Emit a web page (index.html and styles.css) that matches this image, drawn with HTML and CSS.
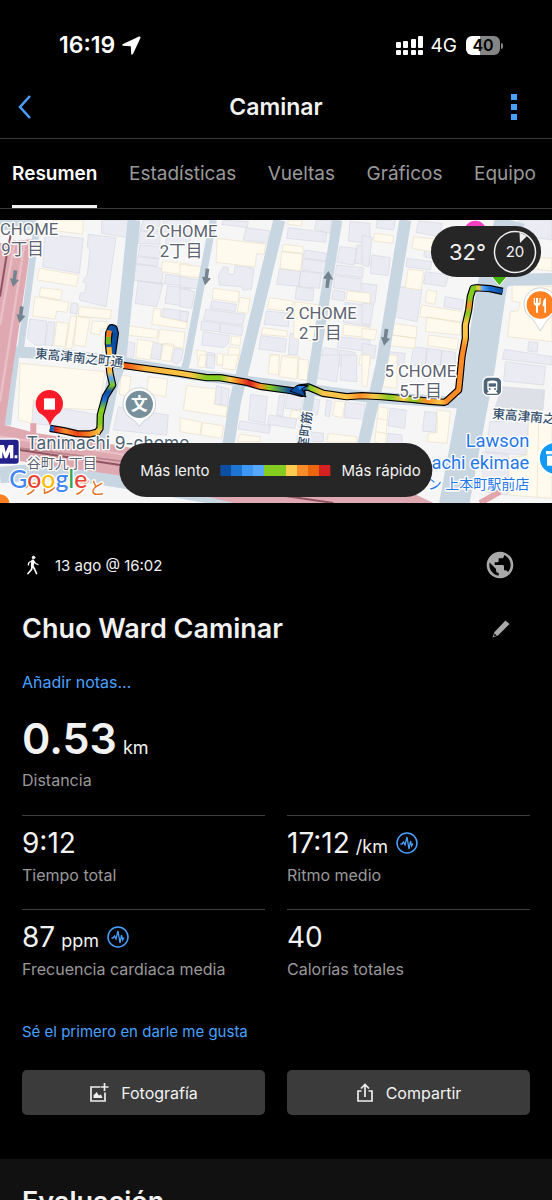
FILE: index.html
```html
<!DOCTYPE html>
<html lang="es">
<head>
<meta charset="UTF-8">
<meta name="viewport" content="width=device-width, initial-scale=1">
<title>Caminar</title>
<link rel="stylesheet" href="styles.css">
</head>
<body>

<div class="app">
    <div class="status-bar">
        <div class="status-left">
            <span class="clock">16:19</span>
            <svg width="19" height="19" viewBox="0 0 19 19"><path d="M17 .6 1 8Q-.6 9.200 1 9.800L8.800 10.200 9.200 18Q9.800 19.600 11 18L18.400 2Q18.800 0 17 .6Z" fill="#fff"/></svg>
        </div>
        <div class="status-right">
            <svg width="28" height="20" viewBox="0 0 28 20" fill="#fff">
                <rect x="0" y="7" width="5" height="6" rx="1"/><rect x="7" y="6" width="5" height="7" rx="1"/><rect x="15" y="4" width="5" height="9" rx="1"/><rect x="22" y="1" width="5" height="12" rx="1"/>
                <rect x="0" y="15" width="5" height="5" rx="1"/><rect x="7" y="15" width="5" height="5" rx="1"/><rect x="15" y="15" width="5" height="5" rx="1"/><rect x="22" y="15" width="5" height="5" rx="1"/>
            </svg>
            <span class="network">4G</span>
            <span class="battery">40</span>
        </div>
    </div>

    <header class="header">
        <button class="icon-button" aria-label="Atrás">
            <svg width="16" height="26" viewBox="0 0 16 26"><path d="M13 2 3 13l10 11" fill="none" stroke="#4aa0ff" stroke-width="2.500"/></svg>
        </button>
        <h1 class="header-title">Caminar</h1>
        <button class="icon-button menu" aria-label="Más opciones">
            <svg width="6" height="26" viewBox="0 0 6 26" fill="#4aa0ff"><path d="M0 0h6v6H0zM0 10h6v6H0zM0 20h6v6H0z"/></svg>
        </button>
    </header>

    <nav class="tabs">
        <a href="#resumen" class="tab active">Resumen</a>
        <a href="#estadisticas" class="tab">Estadísticas</a>
        <a href="#vueltas" class="tab">Vueltas</a>
        <a href="#graficos" class="tab">Gráficos</a>
        <a href="#equipo" class="tab">Equipo</a>
    </nav>

    <div class="map">
        <svg class="map-canvas" viewBox="0 15 1656 849" preserveAspectRatio="xMidYMid slice">
            <defs>
                <linearGradient id="walk" gradientUnits="userSpaceOnUse" x1="340" y1="0" x2="1340" y2="0">
                    <stop offset="0" stop-color="#f0701a"/><stop offset=".04" stop-color="#ef5a18"/><stop offset=".1" stop-color="#fbb53a"/><stop offset=".23" stop-color="#fcc549"/>
                    <stop offset=".28" stop-color="#84cc20"/><stop offset=".32" stop-color="#84cc20"/><stop offset=".35" stop-color="#fcc549"/><stop offset=".37" stop-color="#fb8b25"/>
                    <stop offset=".41" stop-color="#d92121"/><stop offset=".44" stop-color="#fb8b25"/><stop offset=".47" stop-color="#84cc20"/><stop offset=".53" stop-color="#0b4ea2"/>
                    <stop offset=".55" stop-color="#1c6fd0"/><stop offset=".575" stop-color="#0b4ea2"/><stop offset=".59" stop-color="#84cc20"/><stop offset=".63" stop-color="#fcc549"/>
                    <stop offset=".7" stop-color="#fcc549"/><stop offset=".74" stop-color="#fb8b25"/><stop offset=".78" stop-color="#fcc549"/><stop offset=".83" stop-color="#84cc20"/>
                    <stop offset=".87" stop-color="#fcc549"/><stop offset=".9" stop-color="#84cc20"/><stop offset=".94" stop-color="#fb8b25"/><stop offset=".98" stop-color="#fcc549"/><stop offset="1" stop-color="#fb8b25"/>
                </linearGradient>
                <linearGradient id="walkEast" gradientUnits="userSpaceOnUse" x1="0" y1="220" x2="0" y2="420">
                    <stop offset="0" stop-color="#84cc20"/><stop offset=".15" stop-color="#84cc20"/><stop offset=".25" stop-color="#fb8b25"/><stop offset=".38" stop-color="#84cc20"/>
                    <stop offset=".52" stop-color="#fcc549"/><stop offset=".7" stop-color="#fcc549"/><stop offset=".88" stop-color="#fb8b25"/>
                </linearGradient>
                <linearGradient id="walkStart" gradientUnits="userSpaceOnUse" x1="1420" y1="0" x2="1508" y2="0">
                    <stop offset="0" stop-color="#84cc20"/><stop offset=".2" stop-color="#fcc549"/><stop offset=".32" stop-color="#54a5fb"/><stop offset=".55" stop-color="#1c6fd0"/><stop offset="1" stop-color="#0b4ea2"/>
                </linearGradient>
                <linearGradient id="walkWest" gradientUnits="userSpaceOnUse" x1="0" y1="450" x2="0" y2="650">
                    <stop offset="0" stop-color="#fb8b25"/><stop offset=".1" stop-color="#fcc549"/><stop offset=".2" stop-color="#54a5fb"/><stop offset=".3" stop-color="#84cc20"/><stop offset=".4" stop-color="#0b4ea2"/>
                    <stop offset=".52" stop-color="#1c6fd0"/><stop offset=".66" stop-color="#84cc20"/><stop offset=".88" stop-color="#84cc20"/><stop offset="1" stop-color="#fcc549"/>
                </linearGradient>
                <linearGradient id="walkEnd" gradientUnits="userSpaceOnUse" x1="150" y1="0" x2="300" y2="0">
                    <stop offset="0" stop-color="#0b4ea2"/><stop offset=".06" stop-color="#1c6fd0"/><stop offset=".1" stop-color="#d92121"/><stop offset=".3" stop-color="#fb8b25"/><stop offset=".55" stop-color="#e84318"/><stop offset=".8" stop-color="#fb8b25"/><stop offset="1" stop-color="#fcc549"/>
                </linearGradient>
            </defs>

            <rect y="15" width="1656" height="849" fill="#f6f6f7"/>

            <!-- buildings, grey -->
            <g fill="#ebecf3" stroke="#d6d8e1" stroke-width="2">
                <path d="M305 15H385L382 68 305 55ZM135 58 250 70 238 175 128 155ZM265 58 348 68 318 275 238 255 240 235 255 232 258 205 248 200 262 180 270 105 262 95ZM215 263 235 267 231 298 210 293ZM90 312 140 318 135 390H105L82 370ZM145 320 165 322 158 392 135 390ZM420 48 480 55V88L415 85ZM420 90 482 95 478 130 415 122ZM412 125 475 132 472 155 408 145ZM408 148 472 155 490 165 485 208 400 195ZM415 198 490 205 470 275 405 265ZM497 178 545 184 540 212 493 206ZM502 212 570 222V275L495 265ZM490 280 565 290 562 320 485 305ZM375 378 405 385 400 428 385 432 368 420ZM457 380 487 388 480 435 452 430ZM525 400 550 403 545 435 530 448 515 440ZM430 15H480V50L420 45ZM490 15H570V55L485 50ZM500 58H570V88H496Z"/>
                <path transform="translate(540)" d="M130 15 205 20 202 38 125 28ZM198 38 270 48 265 85 190 75ZM130 155 145 158 143 178H162L165 152 222 160 215 222 190 226 185 215 118 210 115 180ZM95 258 170 268 165 290 90 280ZM78 283 195 298 188 330 70 315ZM65 318 120 325 118 350 62 345ZM122 325 190 335 185 362 120 352ZM70 350 148 362 145 385 132 398 65 390ZM82 412 105 415 102 450H78ZM0 185 60 195 52 222 0 215ZM0 220 45 230 35 280 0 275ZM0 288 27 292 20 320 0 318ZM325 38 440 52 437 82 320 70ZM410 15H455L450 55 403 42ZM375 105 440 115 437 138 368 128ZM368 132 438 140 433 175 365 165ZM298 162 362 169 356 214 290 208ZM362 169 425 175 418 220 356 214ZM350 215 402 222 398 258 345 252ZM260 288 330 295 325 335 252 328ZM243 362 320 372 315 412 236 402ZM330 355 357 358 352 420 325 418ZM510 20 570 25V85L505 78ZM480 95 530 100 522 150 470 142ZM532 90H570V150L525 145ZM470 150 550 158 548 188 465 178ZM465 182 545 192 540 230 460 218ZM460 225 495 230 492 258 455 252ZM495 262 570 272V335L490 322ZM478 365 570 375V410L472 398ZM430 398 475 403 470 450H420ZM480 405 525 412 522 450H475Z"/>
                <path transform="translate(1086)" d="M0 60 30 68 20 155 0 150ZM30 120 85 128 78 182 25 175ZM0 205 45 210 38 265 0 262ZM0 264 35 268 25 330 0 325ZM0 385 42 392 38 430 0 425ZM45 15H100L95 45 42 38ZM170 18 240 25 232 65 162 52ZM190 100 215 105 210 130 185 125ZM135 130 210 140 205 165 132 155ZM190 170 260 180 250 215 185 205ZM112 215 180 222 165 320 95 305ZM250 245 305 255 300 285 245 275ZM155 395 195 400 190 450H145ZM195 400 240 406 235 450H190ZM240 406 280 412V450H235ZM75 410 130 415 125 450H70ZM470 15H570V75L470 60ZM500 380 528 383 525 412 497 408ZM428 403 570 425V450L420 432Z"/>
                <path transform="translate(0 420)" d="M100 135 180 160 300 180 285 225 230 220 95 205ZM355 155 400 165 505 180 500 240 340 225Z"/>
                <path transform="translate(540 420)" d="M110 92 148 102 142 155 103 145ZM125 97 122 150M212 118 262 125 255 205 205 195ZM298 120 315 122 308 185 290 180ZM322 118 370 125 365 165 315 160ZM268 180 350 192 345 220 262 208ZM180 198 272 212 268 235 175 222ZM400 130 420 135 412 180 398 178ZM440 135 455 138 448 185 435 182ZM497 142 555 148 550 193 492 188ZM375 228 430 235V260H370ZM420 0H480L470 80 412 70ZM485 0H530V80L480 75ZM82 0H105L102 40 78 38Z"/>
                <path transform="translate(1086 420)" d="M85 160 133 165 128 220 78 212ZM188 170 225 173 220 232 182 228ZM78 235 120 240V280H75ZM430 20 550 35 545 90 425 78ZM385 200 500 198 490 300 370 290ZM360 290 440 300 435 420 365 410Z"/>
                <path d="M1506 515 1634 525 1629 585 1486 575Z" fill="#dee0e8"/>
            </g>

            <!-- buildings, shops -->
            <g fill="#fffaed" stroke="#e8dfc9" stroke-width="2">
                <path d="M160 15H250L248 58 155 45ZM118 160 235 180 230 214 112 195ZM122 218 187 225 182 255 118 243ZM105 245 207 262 200 292 170 288 165 312 98 303ZM238 275 335 285 330 312 235 303ZM212 303 230 305 215 402 197 400ZM230 305 270 310 255 395 222 390ZM278 318 322 320V340L303 342 300 360 272 355ZM170 320 205 325 195 395 162 392ZM310 365 325 367 322 418 308 415ZM488 138 570 148V182L484 170ZM462 280 482 283V305L562 322 560 342 455 328ZM382 332 475 345 470 370 375 360ZM480 343 555 352 550 400 473 385ZM413 373 460 380 450 435 407 428ZM490 385 522 388 512 440 482 435Z"/>
                <path transform="translate(540)" d="M112 70 257 88 252 118 230 115 225 156 108 142ZM0 148 62 155 60 188 0 182ZM100 220 178 230 174 262 97 252ZM180 247 210 252 203 295 172 290ZM155 363 182 367 180 392 152 388ZM50 405 78 410 75 450H55ZM112 415 130 418V450H110ZM148 395 180 400 175 450H135ZM310 88 370 95 368 115 307 108ZM305 110 368 118 362 168 300 160ZM268 248 340 258 335 290 263 282ZM248 338 322 348 320 365 244 358ZM345 260 420 270 415 380 340 370ZM270 418 298 421 295 450H268ZM308 420 358 425V450H303ZM502 228 570 235V265L498 255ZM492 328 570 338V368L488 360ZM540 420H570V450H538ZM325 15H365V33L323 28Z"/>
                <path transform="translate(1086)" d="M38 55 95 62 92 85 35 78ZM0 340 45 345 38 375 0 370ZM155 65 215 72 208 110 150 100ZM138 162 185 168 178 225 130 218ZM195 225 225 230 218 268 190 262ZM180 270 300 290 298 320 172 305ZM195 305 300 325 295 360 190 350ZM200 360 290 372 285 405 197 392ZM92 325 165 335 162 370 85 358ZM85 360 162 370 158 400 82 392ZM450 208 570 215V380L437 365 445 290 468 288 475 262 450 258ZM490 125 570 130V168L500 160Z"/>
                <path transform="translate(0 420)" d="M60 25 315 50 300 140 305 165 195 160 100 135 95 205 55 195ZM363 60 393 65 385 125 358 118ZM445 65 503 72 497 125 440 115Z"/>
                <path transform="translate(540 420)" d="M20 92 108 102 103 148 142 155 138 185 10 165ZM0 188 65 202 60 240 0 230ZM68 203 130 212 125 250 62 240ZM335 165 362 168 358 192 330 188ZM465 138 495 140 488 188 458 182ZM178 238 240 245V260H172ZM445 235 530 245V262H440ZM305 5 355 10 350 72 298 65ZM355 12 385 15 382 75 355 72ZM270 0H298L295 60 265 55ZM60 0H80L75 38 52 35ZM130 0H175L165 45 127 40Z"/>
                <path transform="translate(1086 420)" d="M0 0H25L15 95 0 92ZM60 0H105V100L62 95ZM50 155 78 160 70 275 38 260ZM45 190 75 195M42 230 72 235M225 165 265 170 255 265 195 260 200 235 225 232ZM500 195 570 200V430L440 420V310L495 300ZM530 198 525 425"/>
            </g>

            <!-- streets -->
            <g fill="none" stroke="#c8d6e2" stroke-linejoin="round">
                <path d="M110 40 62 400" stroke-width="20"/>
                <path d="M402 15 358 450 338 500 300 690" stroke-width="38"/>
                <path d="M640 15 560 440 548 480" stroke-width="22"/>
                <path d="M838 15 735 440 705 560 685 690 650 864" stroke-width="36"/>
                <path d="M1012 15 945 435 920 600 900 700" stroke-width="30"/>
                <path d="M1216 15 1145 450 1110 600 1085 710" stroke-width="36"/>
                <path d="M1530 15 1475 220 1441 450 1405 640 1360 880" stroke-width="90"/>
                <path d="M1480 210 1530 194 1656 192" stroke-width="36"/>
                <path d="M30 410 180 418 350 440 560 476 900 520 1100 546 1300 558 1420 566" stroke-width="34"/>
                <path d="M45 420 20 630" stroke-width="26"/>
                <path d="M0 780 180 765 400 800 760 864" stroke-width="50"/>
                <path d="M0 30H110" stroke-width="30"/>
            </g>

            <!-- railway -->
            <path d="M0 85 95 72 48 400 40 450 14 630 110 655 350 690 800 780 1250 840 1300 864H700L350 780 0 730Z" fill="#dfa9b2"/>
            <path d="M45 75 0 330M75 75 25 400 0 560M0 665 350 715 700 790" fill="none" stroke="#e9c0c5" stroke-width="7"/>
            <path d="M32 60 20 120 0 245M60 705 360 750 800 835 1000 864" fill="none" stroke="#8f5560" stroke-width="6"/>
            <path d="M0 692 360 738 820 830" fill="none" stroke="#b98189" stroke-width="5"/>
            <path d="M100 625V665M1500 830 1440 864" stroke="#e3a5ac" stroke-width="18"/>

            <!-- one-way arrows -->
            <g fill="#75838f">
                <path id="oneway" d="M41 165 52 167 48 193 57 195 39 216 30 190 38 191Z"/>
                <use href="#oneway" x="19" y="108"/><use href="#oneway" x="576" y="-5"/><use href="#oneway" x="1113" y="176"/>
                <path d="M985 168 1000 194 990 193 986 219 976 218 979 192 969 190Z"/>
            </g>

            <!-- recorded track -->
            <g fill="none" stroke-linejoin="round">
                <g stroke="#000" stroke-width="22">
                    <path id="track1" d="M1508 229 1470 221 1428 218"/>
                    <path id="track2" d="M1432 218 1419 220 1411 245 1406 285 1396 330V370L1386 425 1376 525 1338 560"/>
                    <path id="track3" d="M1342 558 1332 562 1290 559 1236 553 1146 545 1086 542 1040 545 970 535 925 516 900 519 906 535 875 527 780 514 740 502 660 488 620 488 540 475 375 452 330 446"/>
                    <path id="track4" d="M326 440 330 476 338 510 316 545 301 600 300 640 290 654"/>
                    <path id="track5" d="M298 650 270 657 230 656 190 647 150 640"/>
                    <path id="track6" d="M334 440 346 355 342 340 334 338 326 355 325 385 331 440"/>
                </g>
                <g stroke-width="15">
                    <use href="#track3" stroke="url(#walk)"/><use href="#track2" stroke="url(#walkEast)"/><use href="#track1" stroke="url(#walkStart)"/>
                    <use href="#track4" stroke="url(#walkWest)"/><use href="#track5" stroke="url(#walkEnd)"/><use href="#track6" stroke="#0b4ea2"/>
                    <path d="M328 346 325 370" stroke="#f07a1d"/><path d="M325 366V388" stroke="#6fb92b"/><path d="M327 396 331 436" stroke="#fbb53a"/>
                </g>
                <path d="M890 512H925L905 520 918 546 870 528Z" fill="#0b4ea2" stroke="#000" stroke-width="3"/>
                <path d="M893 514H915L898 524Z" fill="#2f8af5"/>
            </g>

            <!-- places -->
            <g stroke="#fff" stroke-width="7">
                <circle cx="1426" cy="52" r="38" fill="#f33fc0"/>
                <path d="M1462 170 1498 212 1534 170Z" fill="#43b30b" stroke-width="3"/>
                <rect x="1449" y="486" width="56" height="56" rx="15" fill="#4d6578" stroke-width="4"/>
                <circle cx="1666" cy="730" r="50" fill="#1499f5"/>
                <circle cx="0" cy="866" r="32" fill="#ff8122"/>
                <rect x="-20" y="672" width="78" height="76" rx="10" fill="#22208a" stroke-width="4"/>
            </g>
            <g fill="#fff" stroke="#b4bcc4" stroke-width="2">
                <path d="M1621 348Q1610 328 1595 309A49 49 0 1 1 1647 309Q1632 328 1621 348Z"/>
                <path d="M418 634Q408 618 392 609A49 49 0 1 1 444 609Q428 618 418 634Z"/>
            </g>
            <circle cx="1621" cy="270" r="41" fill="#ff8122"/>
            <circle cx="418" cy="568" r="41" fill="#78909c"/>
            <path d="M150 632Q142 606 118 594A41 41 0 1 1 178 594Q158 606 150 632Z" fill="#fb1a28"/>
            <path d="M132 550H165V584H132Z" fill="#fff"/>
            <path d="M0 730V690H12L17 712 26 690H40V730H30V710L21 730H14L7 710V730ZM44 721H52V730H44Z" fill="#fff"/>
            <path d="M1601 249V263Q1601 271 1608 272V293H1614V272Q1622 271 1622 263V249H1618V263H1614V249H1608V263H1605V249ZM1637 249Q1628 252 1628 274H1633V293H1638V249Z" fill="#fff"/>
            <path d="M1462 500Q1477 493 1492 500V524L1487 530H1490L1494 536H1460L1464 530H1467L1462 524Z" fill="#fff"/>
            <path d="M1466 505H1488V515H1466Z" fill="#4d6578"/><circle cx="1469" cy="522" r="3" fill="#4d6578"/><circle cx="1485" cy="522" r="3" fill="#4d6578"/>
            <path d="M1638 708H1656V718H1638ZM1641 722H1656V752H1641Z" fill="#fff"/>

            <g class="map-labels">
                <text x="0" y="60">CHOME</text>
                <text x="4" y="119">9丁目</text>
                <text x="545" y="66" text-anchor="middle">2 CHOME</text>
                <text x="543" y="125" text-anchor="middle">2丁目</text>
                <text x="963" y="312" text-anchor="middle">2 CHOME</text>
                <text x="961" y="371" text-anchor="middle">2丁目</text>
                <text x="1261" y="486" text-anchor="middle">5 CHOME</text>
                <text x="1262" y="546" text-anchor="middle">5丁目</text>
                <g class="street">
                    <text transform="translate(104 428) rotate(6)">東高津南之町通</text>
                    <text transform="translate(1476 609) rotate(5)">東高津南之町通</text>
                    <text transform="translate(922 704) rotate(-83)">室町筋</text>
                </g>
                <text x="80" y="703" class="station">Tanimachi 9-chome</text>
                <text x="80" y="760" class="small">谷町九丁目</text>
                <text x="70" y="836" class="food">クレープと</text>
                <g class="shop" text-anchor="end">
                    <text x="1588" y="695">Lawson</text>
                    <text x="1588" y="763">machi ekimae</text>
                    <text x="1588" y="822" class="small">ン 上本町駅前店</text>
                </g>
                <text x="418" y="585" class="school" text-anchor="middle">文</text>
                <text x="28" y="819" class="google"><tspan fill="#4285f4">G</tspan><tspan fill="#ea4335">o</tspan><tspan fill="#fbbc05">o</tspan><tspan fill="#4285f4">g</tspan><tspan fill="#34a853">l</tspan><tspan fill="#ea4335">e</tspan></text>
            </g>
        </svg>

        <div class="weather">
            <span>32°</span>
            <span class="wind">20
                <svg width="44" height="44" viewBox="0 0 44 44"><circle cx="22" cy="22" r="20.500" fill="none" stroke="#eee" stroke-width="1.500"/><path d="M26.500 2.500 34 6l-7 7Z" fill="#eee"/></svg>
            </span>
        </div>

        <div class="legend">
            <span>Más lento</span>
            <div class="scale"></div>
            <span>Más rápido</span>
        </div>
    </div>

    <main class="details">
        <div class="row date-row">
            <div class="date">
                <svg width="22" height="22" viewBox="0 0 22 22" fill="none" stroke="#fff" stroke-linecap="round" stroke-linejoin="round"><circle cx="11.500" cy="3.500" r="1.300" fill="#fff"/><path d="M10.800 7 10.300 12" stroke-width="3"/><path d="M10.300 12 9.500 15.500 6 19.500M10.800 12 12.500 15 14.500 19.500" stroke-width="1.700"/><path d="M10 7 7 8.500 6.200 11M11.500 7 13.500 9.500 16 10.500" stroke-width="1.300"/></svg>
                <span>13 ago @ 16:02</span>
            </div>
            <svg width="32" height="32" viewBox="0 0 24 24" fill="#a9a9a9"><path d="M12 2C6.480 2 2 6.480 2 12s4.480 10 10 10 10-4.480 10-10S17.520 2 12 2zm-1 17.930c-3.950-.49-7-3.850-7-7.930 0-.62.080-1.210.21-1.790L9 15v1c0 1.100.9 2 2 2v1.930zm6.900-2.540c-.26-.81-1-1.390-1.900-1.390h-1v-3c0-.55-.45-1-1-1H8v-2h2c.55 0 1-.45 1-1V7h2c1.100 0 2-.9 2-2v-.41c2.930 1.190 5 4.060 5 7.410 0 2.080-.8 3.970-2.100 5.390z"/></svg>
        </div>

        <div class="row name-row">
            <h2>Chuo Ward Caminar</h2>
            <button class="icon-button edit" aria-label="Editar nombre">
                <svg width="18" height="18" viewBox="0 0 18 18"><path d="M13.500 .5 17.500 4 6 15.500.5 17.500 2.500 12Z" fill="#a9a9a9"/><path d="M2.500 13.500 4.800 15.500 2 16.300Z" fill="#000"/></svg>
            </button>
        </div>

        <a href="#notas" class="link notes">Añadir notas...</a>

        <div class="distance"><strong>0.53</strong> <small>km</small></div>
        <div class="label">Distancia</div>

        <div class="stats">
            <div class="stat">
                <div class="value">9:12</div>
                <div class="label">Tiempo total</div>
            </div>
            <div class="stat">
                <div class="value">17:12 <small>/km</small>
                    <svg class="pulse" width="22" height="22" viewBox="0 0 22 22" fill="none" stroke="#4aa0ff"><circle cx="11" cy="11" r="10" stroke-width="1.500"/><path d="M4.500 12h1.500l1.500-2 1.500 3 2-8 2 12 1.500-8 1.200 5 1.300-2.500" stroke-width="1.300"/></svg>
                </div>
                <div class="label">Ritmo medio</div>
            </div>
            <div class="stat">
                <div class="value">87 <small>ppm</small>
                    <svg class="pulse" width="22" height="22" viewBox="0 0 22 22" fill="none" stroke="#4aa0ff"><circle cx="11" cy="11" r="10" stroke-width="1.500"/><path d="M4.500 12h1.500l1.500-2 1.500 3 2-8 2 12 1.500-8 1.200 5 1.300-2.500" stroke-width="1.300"/></svg>
                </div>
                <div class="label">Frecuencia cardiaca media</div>
            </div>
            <div class="stat">
                <div class="value">40</div>
                <div class="label">Calorías totales</div>
            </div>
        </div>

        <a href="#me-gusta" class="link like">Sé el primero en darle me gusta</a>

        <div class="actions">
            <button class="action">
                <svg width="20" height="20" viewBox="0 0 20 20" fill="none" stroke="#eee" stroke-width="1.700"><path d="M11 4H2v14h14V9.500M15.500 0v8M11.500 4h8"/><path d="M4.500 15v-3l1.500-1 1.500-2 2.500 3.500 2-1 1.500 3.500Z" fill="#eee" stroke="none"/></svg>
                Fotografía
            </button>
            <button class="action">
                <svg width="18" height="20" viewBox="0 0 18 20" fill="none" stroke="#eee" stroke-width="1.700"><path d="M5.500 8H2v10h14V8h-3.500M9 14V2M5 5.500 9 1.500l4 4"/></svg>
                Compartir
            </button>
        </div>
    </main>

    <section class="evaluation">
        <h2>Evaluación</h2>
    </section>
</div>

</body>
</html>
```
FILE: styles.css
```css
* {
    box-sizing: border-box;
}

body {
    margin: 0;
    background-color: #000;
    color: #f2f2f2;
    font-family: Inter, "Noto Sans CJK JP", sans-serif;
    font-size: 15px;
}

h1, h2 {
    margin: 0;
    font-weight: 600;
}

a {
    text-decoration: none;
}

button {
    border: none;
    font: inherit;
    color: inherit;
    cursor: pointer;
}

svg {
    display: block;
    flex-shrink: 0;
}

.app {
    height: 100vh;
    overflow: hidden;
}

/* Status bar */
.status-bar {
    display: flex;
    justify-content: space-between;
    align-items: center;
    height: 76px;
    padding: 14px 52px 0 59px;
    color: #fff;
}

.status-left, .status-right {
    display: flex;
    align-items: center;
    gap: 7px;
}

.clock {
    font-size: 23px;
    font-weight: 600;
}

.network {
    font-size: 19px;
}

.battery {
    position: relative;
    width: 34px;
    margin-left: 2px;
    border-radius: 6px;
    background: linear-gradient(90deg, #fff 40%, #858585 40%);
    color: #000;
    font-size: 16px;
    font-weight: 600;
    line-height: 19px;
    text-align: center;
}

.battery::after {
    content: "";
    position: absolute;
    top: 7px;
    right: -3px;
    width: 2px;
    height: 6px;
    border-radius: 0 2px 2px 0;
    background: #858585;
}

/* Header */
.header {
    display: grid;
    grid-template-columns: 40px 1fr 40px;
    align-items: center;
    height: 62px;
    padding: 0 17px;
}

.header-title {
    font-size: 23px;
    text-align: center;
}

.icon-button {
    display: flex;
    padding: 0;
    background: none;
}

.menu {
    justify-self: end;
    margin-right: 18px;
}

.tabs {
    display: flex;
    justify-content: space-between;
    height: 71px;
    padding: 0 16px 0 12px;
    border-top: 1px solid #3a3a3a;
    border-bottom: 1px solid #3a3a3a;
}

.tab {
    padding-top: 3px;
    border-bottom: 3px solid transparent;
    color: #999;
    font-size: 19px;
    line-height: 64px;
}

.tab.active {
    border-color: #f2f2f2;
    color: #fff;
    font-weight: 600;
}

/* Map */
.map {
    position: relative;
    margin-top: 11px;
}

.map-canvas {
    width: 100%;
    height: 283px;
}

.map-labels {
    font-family: Roboto, "Noto Sans CJK JP", sans-serif;
    font-size: 50px;
    fill: #5d6370;
    stroke: #fff;
    stroke-width: 8px;
    stroke-linejoin: round;
    paint-order: stroke;
}

.map-labels .street {
    font-size: 38px;
    font-weight: 500;
    fill: #35506c;
}

.map-labels .station {
    font-family: Inter, sans-serif;
    font-size: 52px;
    fill: #4c6274;
}

.map-labels .small {
    font-size: 42px;
}

.map-labels .food {
    fill: #e0701c;
}

.map-labels .shop {
    font-size: 55px;
    fill: #1f78e6;
}

.map-labels .school {
    font-weight: 700;
    fill: #fff;
    stroke: none;
}

.map-labels .google {
    font-family: Lato, sans-serif;
    font-size: 74px;
    font-weight: 500;
}

.weather, .legend {
    position: absolute;
    display: flex;
    align-items: center;
    border-radius: 27px;
    background-color: #262626;
}

.weather {
    top: 6px;
    right: 11px;
    gap: 7px;
    height: 51px;
    padding: 0 4px 0 18px;
    font-size: 22px;
}

.wind {
    position: relative;
    width: 44px;
    font-size: 15px;
    line-height: 44px;
    text-align: center;
}

.wind svg {
    position: absolute;
    top: 0;
    left: 0;
}

.legend {
    bottom: 6px;
    left: 50%;
    gap: 11px;
    height: 54px;
    padding: 0 12px 0 21px;
    transform: translateX(-50%);
    font-size: 15px;
    white-space: nowrap;
}

.scale {
    width: 110px;
    height: 11px;
    background: linear-gradient(90deg, #0b4ea2 10%, #1d74d2 10% 20%, #3e97f4 20% 30%, #57a8fd 30% 40%, #84cc20 40% 60%, #fccb50 60% 70%, #fb8b28 70% 80%, #e9660f 80% 90%, #d52121 90%);
}

/* Activity details */
.details {
    padding: 46px 22px 44px;
}

.row {
    display: flex;
    justify-content: space-between;
    align-items: center;
}

.date-row {
    padding-right: 14px;
}

.date {
    display: flex;
    align-items: center;
    gap: 11px;
}

.name-row {
    margin-top: 31px;
    padding-right: 20px;
}

.name-row h2 {
    font-size: 27px;
    line-height: 34px;
}

.link {
    display: block;
    color: #4aa0ff;
    line-height: 20px;
}

.notes {
    margin-top: 26px;
    font-size: 16px;
}

.distance, .value {
    display: flex;
    align-items: baseline;
    gap: 6px;
}

.distance {
    margin-top: 18px;
    line-height: 56px;
}

.distance strong {
    font-size: 43px;
    font-weight: 600;
}

.distance small, .value small {
    font-size: 18px;
    line-height: 20px;
}

.label {
    margin-top: 4px;
    color: #999;
    font-size: 16px;
    line-height: 20px;
}

.stats {
    display: grid;
    grid-template-columns: 1fr 1fr;
    column-gap: 22px;
    margin-top: 25px;
}

.stat {
    padding: 9px 0 24px;
    border-top: 1px solid #3e3e3e;
}

.value {
    font-size: 28px;
    line-height: 36px;
}

.pulse {
    align-self: center;
    margin-left: 2px;
}

.like {
    margin-top: 19px;
}

.actions {
    display: grid;
    grid-template-columns: 1fr 1fr;
    gap: 22px;
    margin-top: 28px;
}

.action {
    display: flex;
    justify-content: center;
    align-items: center;
    gap: 12px;
    height: 45px;
    border-radius: 5px;
    background-color: #3b3b3b;
    font-size: 16px;
}

.evaluation {
    padding: 26px 22px;
    background-color: #111;
}

.evaluation h2 {
    font-size: 27px;
    line-height: 34px;
}
```
